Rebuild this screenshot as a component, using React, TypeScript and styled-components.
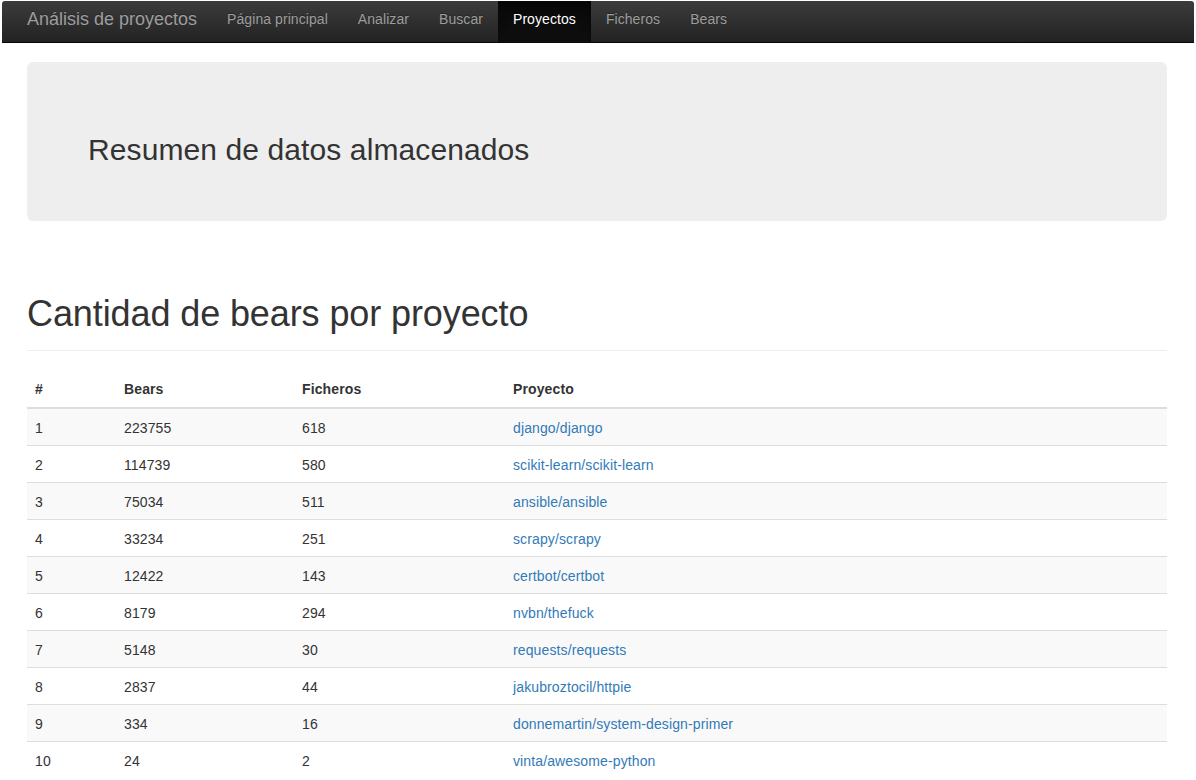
import React from "react"
import styled, { createGlobalStyle } from "styled-components"

const GlobalStyle = createGlobalStyle`
	body {
		margin: 0;
		background: #fff;
		color: #333;
		font-family: "Liberation Sans", Arial, sans-serif;
		font-size: 14px;
		line-height: 1.42857;
	}
	* { box-sizing: border-box; }
`

const Navbar = styled.nav`
	display: flex;
	align-items: stretch;
	height: 42px;
	margin: 1px 2px 0 2px;
	padding: 0 0 0 12px;
	background-image: linear-gradient(to bottom, #3c3c3c 0%, #222 100%);
	border-bottom: 1px solid #080808;
	border-radius: 3px 3px 0 0;
`

const Brand = styled.a`
	display: flex;
	align-items: center;
	padding: 0 15px 3px 13px;
	font-size: 18px;
	color: #9d9d9d;
	text-decoration: none;
	text-shadow: 0 -1px 0 rgba(0, 0, 0, 0.25);
`

const NavList = styled.ul`
	display: flex;
	list-style: none;
	margin: 0;
	padding: 0;
`

const NavLink = styled.a<{ $active?: boolean }>`
	display: flex;
	align-items: center;
	height: 100%;
	padding: 0 15px 3px 15px;
	letter-spacing: 0.07px;
	color: ${(p) => (p.$active ? "#fff" : "#9d9d9d")};
	text-decoration: none;
	text-shadow: 0 -1px 0 rgba(0, 0, 0, 0.25);
	background: ${(p) => (p.$active ? "linear-gradient(to bottom, #080808 0%, #0f0f0f 100%)" : "transparent")};
	box-shadow: ${(p) => (p.$active ? "inset 0 3px 9px rgba(0, 0, 0, 0.25)" : "none")};
`

const Container = styled.div`
	width: 1140px;
	margin: 0 29px 0 27px;
`

const Jumbotron = styled.div`
	margin-top: 19px;
	padding: 48px 60px 48px 61px;
	background: #eee;
	border-radius: 6px;
`

const JumboTitle = styled.h1`
	margin: 23px 0 7px;
	font-size: 30px;
	font-weight: 500;
	line-height: 33px;
	letter-spacing: 0.1px;
	color: #333;
`

const PageHeader = styled.div`
	margin-top: 73px;
	padding-bottom: 9px;
	border-bottom: 1px solid #eee;
`

const Title = styled.h1`
	margin: 0 0 7px;
	font-size: 36px;
	font-weight: 500;
	line-height: 40px;
	letter-spacing: -0.1px;
	color: #333;
`

const Table = styled.table`
	width: 100%;
	margin-top: 20px;
	border-collapse: collapse;
	border-spacing: 0;
	letter-spacing: 0.12px;
`

const Th = styled.th<{ $w?: number }>`
	width: ${(p) => (p.$w ? `${p.$w}px` : "auto")};
	padding: 8px;
	text-align: left;
	font-weight: bold;
	line-height: 20px;
	border-bottom: 2px solid #ddd;
`

const Row = styled.tr<{ $striped: boolean }>`
	background: ${(p) => (p.$striped ? "#f9f9f9" : "transparent")};
`

const Td = styled.td`
	padding: 9px 8px 7px;
	line-height: 20px;
	border-top: 1px solid #ddd;
	vertical-align: top;
`

const Link = styled.a`
	color: #337ab7;
	text-decoration: none;
`

const rows = [
	[223755, 618, "django/django"],
	[114739, 580, "scikit-learn/scikit-learn"],
	[75034, 511, "ansible/ansible"],
	[33234, 251, "scrapy/scrapy"],
	[12422, 143, "certbot/certbot"],
	[8179, 294, "nvbn/thefuck"],
	[5148, 30, "requests/requests"],
	[2837, 44, "jakubroztocil/httpie"],
	[334, 16, "donnemartin/system-design-primer"],
	[24, 2, "vinta/awesome-python"],
]

const navItems = ["Página principal", "Analizar", "Buscar", "Proyectos", "Ficheros", "Bears"]

export default function App() {
	return (
		<>
			<GlobalStyle />
			<Navbar>
				<Brand href="#">Análisis de proyectos</Brand>
				<NavList>
					{navItems.map((item) => (
						<li key={item}>
							<NavLink href="#" $active={item === "Proyectos"}>
								{item}
							</NavLink>
						</li>
					))}
				</NavList>
			</Navbar>
			<Container>
				<Jumbotron>
					<JumboTitle>Resumen de datos almacenados</JumboTitle>
				</Jumbotron>
				<PageHeader>
					<Title>Cantidad de bears por proyecto</Title>
				</PageHeader>
				<Table>
					<thead>
						<tr>
							<Th $w={89}>#</Th>
							<Th $w={178}>Bears</Th>
							<Th $w={211}>Ficheros</Th>
							<Th>Proyecto</Th>
						</tr>
					</thead>
					<tbody>
						{rows.map(([bears, files, project], i) => (
							<Row key={project} $striped={i % 2 === 0}>
								<Td>{i + 1}</Td>
								<Td>{bears}</Td>
								<Td>{files}</Td>
								<Td>
									<Link href="#">{project}</Link>
								</Td>
							</Row>
						))}
					</tbody>
				</Table>
			</Container>
		</>
	)
}
